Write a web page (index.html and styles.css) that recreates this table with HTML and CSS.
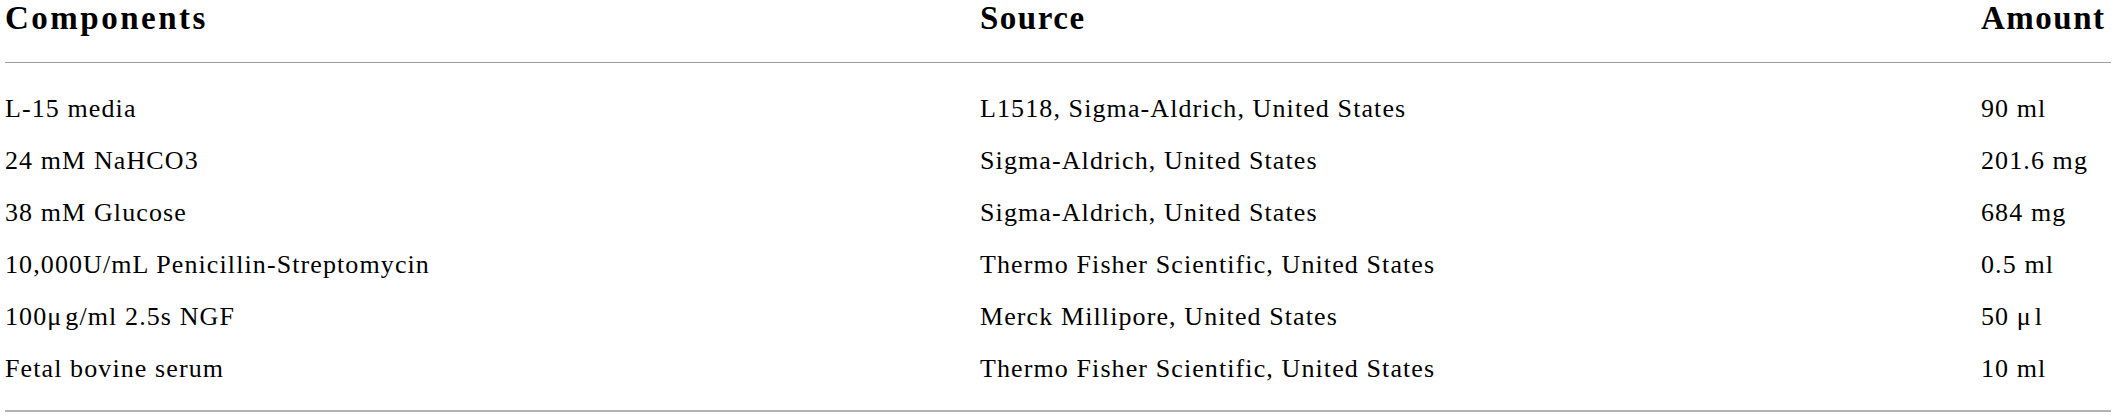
FILE: index.html
```html
<!DOCTYPE html>
<html lang="en">
<head>
<meta charset="utf-8">
<title>Components</title>
<link rel="stylesheet" href="styles.css">
</head>
<body>
<table class="media-table">
  <colgroup>
    <col class="col-comp">
    <col class="col-src">
    <col class="col-amt">
  </colgroup>
  <thead>
    <tr>
      <th class="th-wide">Components</th>
      <th>Source</th>
      <th>Amount</th>
    </tr>
  </thead>
  <tbody>
    <tr>
      <td>L-15 media</td>
      <td>L1518, Sigma-Aldrich, United States</td>
      <td>90 ml</td>
    </tr>
    <tr>
      <td>24 mM NaHCO3</td>
      <td>Sigma-Aldrich, United States</td>
      <td>201.6 mg</td>
    </tr>
    <tr>
      <td>38 mM Glucose</td>
      <td>Sigma-Aldrich, United States</td>
      <td>684 mg</td>
    </tr>
    <tr>
      <td>10,000U/mL Penicillin-Streptomycin</td>
      <td>Thermo Fisher Scientific, United States</td>
      <td>0.5 ml</td>
    </tr>
    <tr>
      <td>100<span class="mu">μ</span>g/ml 2.5s NGF</td>
      <td>Merck Millipore, United States</td>
      <td>50 <span class="mu">μ</span>l</td>
    </tr>
    <tr>
      <td>Fetal bovine serum</td>
      <td>Thermo Fisher Scientific, United States</td>
      <td>10 ml</td>
    </tr>
  </tbody>
</table>
</body>
</html>
```
FILE: styles.css
```css
html, body {
  margin: 0;
  padding: 0;
  background: #ffffff;
}

body {
  padding-left: 5px;
  font-family: "Liberation Serif", "Times New Roman", serif;
  color: #000000;
}

.media-table {
  width: 2106px;
  table-layout: fixed;
  border-collapse: collapse;
  border-bottom: 2px solid #b4b4b4;
}

.col-comp { width: 975px; }
.col-src { width: 1001px; }
.col-amt { width: 130px; }

.media-table th {
  text-align: left;
  font-weight: bold;
  font-size: 33px;
  line-height: 36px;
  letter-spacing: 1.5px;
  padding: 0 0 26px 0;
  border-bottom: 1px solid #9c9c9c;
  white-space: nowrap;
}

.media-table th.th-wide {
  letter-spacing: 2.5px;
}

.media-table td {
  font-size: 26px;
  line-height: 52px;
  letter-spacing: 1.1px;
  padding: 0;
  white-space: nowrap;
  vertical-align: top;
}

.media-table tbody tr:first-child td {
  padding-top: 20px;
}

.media-table tbody tr:last-child td {
  padding-bottom: 15px;
}

.mu {
  margin-right: 3px;
}
```
